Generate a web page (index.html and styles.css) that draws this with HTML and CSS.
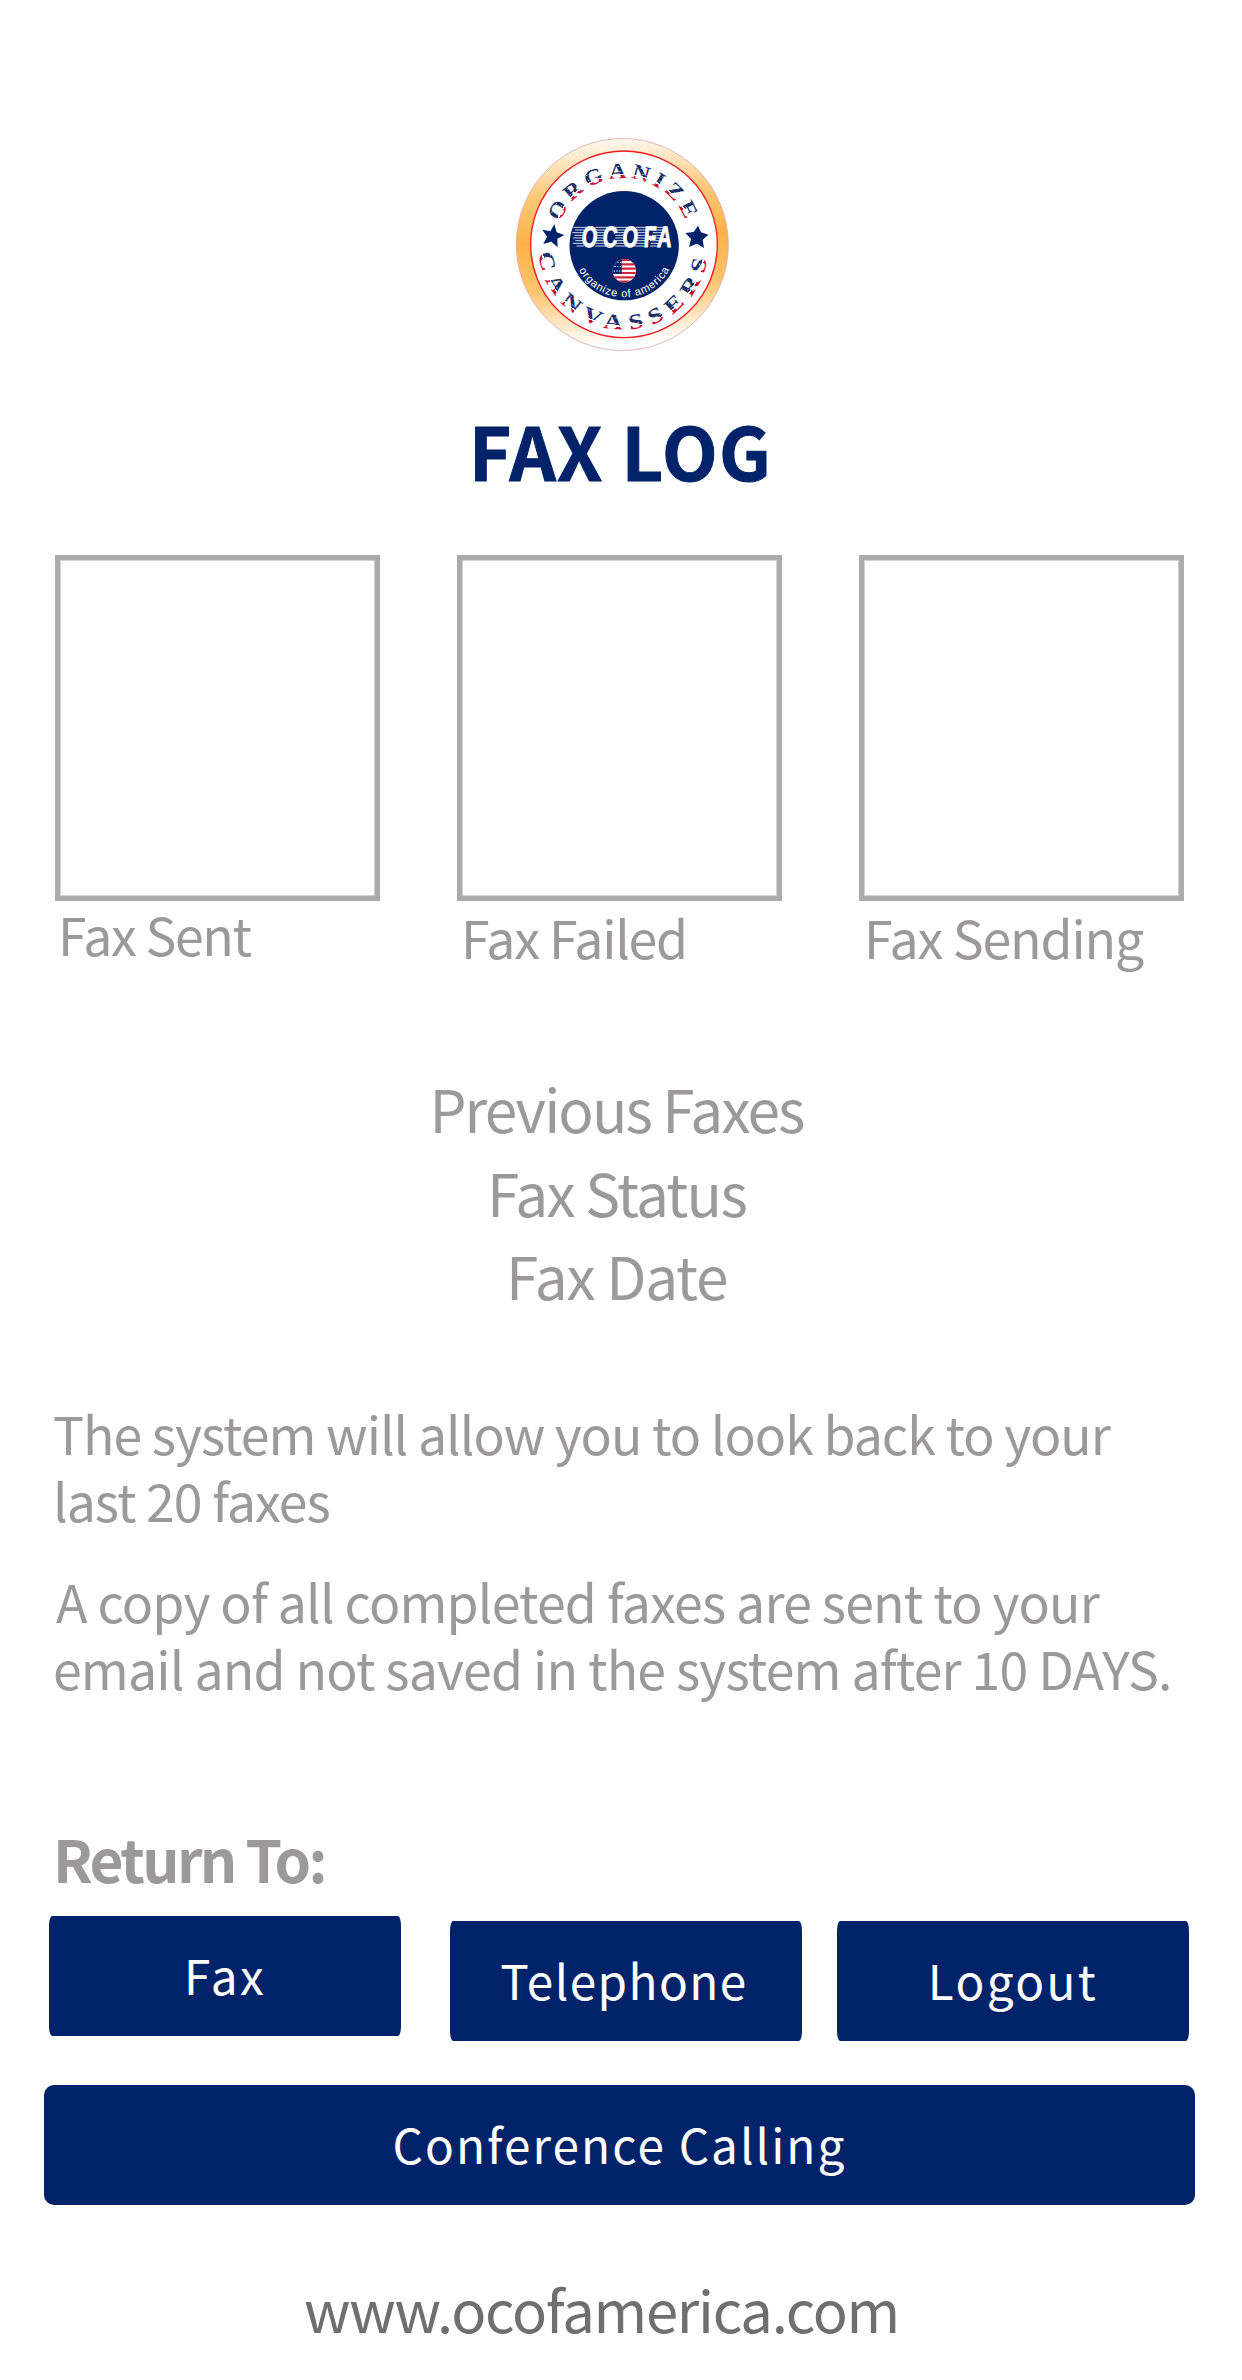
FILE: index.html
```html
<!DOCTYPE html>
<html lang="en">
<head>
<meta charset="utf-8">
<title>Fax Log</title>
<link rel="stylesheet" href="styles.css">
</head>
<body>
<main class="page">
  <svg class="logo" viewBox="0 0 735 720" role="img" aria-label="OCOFA Organize Canvassers">
    <defs>
      <linearGradient id="gold" x1="0" y1="0" x2="0.06" y2="1">
        <stop offset="0" stop-color="#fff"/>
        <stop offset=".06" stop-color="#fef3e2"/>
        <stop offset=".28" stop-color="#fdc878"/>
        <stop offset=".5" stop-color="#fdb248"/>
        <stop offset=".72" stop-color="#fdc36c"/>
        <stop offset=".93" stop-color="#fef0dc"/>
        <stop offset="1" stop-color="#fff"/>
      </linearGradient>
      <radialGradient id="inkTop" gradientUnits="userSpaceOnUse" cx="370" cy="360" r="260">
        <stop offset=".806" stop-color="#c8102e"/>
        <stop offset=".806" stop-color="#fff"/>
        <stop offset=".822" stop-color="#fff"/>
        <stop offset=".822" stop-color="#1b2d66"/>
      </radialGradient>
      <radialGradient id="inkBottom" gradientUnits="userSpaceOnUse" cx="370" cy="360" r="260">
        <stop offset=".93" stop-color="#1b2d66"/>
        <stop offset=".93" stop-color="#fff"/>
        <stop offset=".945" stop-color="#fff"/>
        <stop offset=".945" stop-color="#c8102e"/>
      </radialGradient>
      <path id="arcTop" d="M178 299A202 202 0 0 1 562 299"/>
      <path id="arcBottom" d="M115 380A256 256 0 0 0 625 380"/>
      <path id="arcInner" d="M235 431A152 152 0 0 0 512 424"/>
      <clipPath id="globe"><circle cx="373" cy="437" r="35"/></clipPath>
    </defs>
    <circle cx="367" cy="358.500" r="318" fill="url(#gold)" stroke="#dcaaa6" stroke-width="2.500"/>
    <circle cx="372" cy="358" r="280" fill="#fff" stroke="#ec1c24" stroke-width="4"/>
    <circle cx="372.500" cy="362" r="164" fill="#02236a"/>
    <text class="ring-text" fill="url(#inkTop)"><textPath href="#arcTop" startOffset="8" textLength="496" lengthAdjust="spacingAndGlyphs">ORGANIZE</textPath></text>
    <text class="ring-text ring-text-low" fill="url(#inkBottom)"><textPath href="#arcBottom" startOffset="6" textLength="752" lengthAdjust="spacingAndGlyphs">CANVASSERS</textPath></text>
    <g fill="none" stroke="#fff" stroke-width="2.500" stroke-dasharray="5 9">
      <circle cx="370" cy="360" r="220"/>
      <circle cx="370" cy="360" r="236"/>
    </g>
    <g fill="#02236a">
      <path d="M163 298L170 322L193 330L172 341L173 367L154 350L130 357L141 335L127 314L151 319Z"/>
      <path d="M594 302L603 322L625 329L608 344L612 369L590 356L567 366L573 342L556 324L581 321Z"/>
    </g>
    <path d="M220 307H262M225 315H258M217 323H254M224 331H252M219 339H250M226 347H251M218 355H252M230 363H252
             M286 307H328M288 315H322M288 323H318M288 331H316M287 339H314M286 347H314M286 355H315M286 363H318
             M342 307H388M346 315H384M346 323H380M346 331H378M346 339H376M346 347H376M346 355H378M346 363H380
             M408 307H446M408 315H444M408 323H442M408 331H440M408 339H438M406 347H436M404 355H434M402 363H432
             M458 307H496M458 315H492M458 323H488M456 331H484M450 339H480M450 347H478M452 355H474M450 363H470" stroke="#fff" stroke-width="2.500" fill="none"/>
    <text class="wordmark" transform="translate(0 366) skewX(-4) scale(.68 1)" x="358 451 538 632 692">OCOFA</text>
    <g clip-path="url(#globe)">
      <path fill="#fff" d="M336 400h75v75h-75z"/>
      <path d="M336 405h75M336 418h75M336 431h75M336 444h75M336 457h75M336 470h75" stroke="#d3263b" stroke-width="6.500"/>
      <path fill="#02236a" d="M336 400h29v46h-29z"/>
      <path d="M343 425h20M341 438h22M352 412h12" stroke="#fff" stroke-width="3" stroke-dasharray="4 4"/>
    </g>
    <text class="tagline"><textPath href="#arcInner" startOffset="4" textLength="334" lengthAdjust="spacing">organize of america</textPath></text>
  </svg>

  <h1 class="title">FAX LOG</h1>

  <section class="boxes">
    <div class="entry"><div class="box"></div><p class="label label-sent">Fax Sent</p></div>
    <div class="entry"><div class="box"></div><p class="label label-failed">Fax Failed</p></div>
    <div class="entry"><div class="box"></div><p class="label label-sending">Fax Sending</p></div>
  </section>

  <ul class="details">
    <li class="previous">Previous Faxes</li>
    <li class="status">Fax Status</li>
    <li class="date">Fax Date</li>
  </ul>

  <section class="notes">
    <p class="note note-history">The system will allow you to look back to your<br>last 20 faxes</p>
    <p class="note note-copy"><span class="indent">A copy of all completed faxes are sent to your</span><br>email and not saved in the system after 10 DAYS.</p>
  </section>

  <h2 class="return">Return To:</h2>
  <nav class="links">
    <a class="button button-fax">Fax</a>
    <a class="button button-phone">Telephone</a>
    <a class="button button-logout">Logout</a>
  </nav>
  <a class="button button-wide">Conference Calling</a>

  <footer class="site">www.ocofamerica.com</footer>
</main>
</body>
</html>
```
FILE: styles.css
```css
* { box-sizing: border-box; margin: 0; padding: 0; }

body {
  background: #fff;
  color: #9b9999;
  font-family: "Noto Sans CJK SC", "Open Sans", sans-serif;
}

.page {
  display: flex;
  flex-direction: column;
  width: 1242px;
  height: 2380px;
  padding-top: 125px;
  white-space: nowrap;
}

.logo { width: 245px; height: 240px; margin-left: 500px; flex: none; }
.ring-text { font: bold 66px "Liberation Serif", serif; letter-spacing: 12px; }
.ring-text-low { font-size: 64px; letter-spacing: 18px; }
.wordmark { font: bold 88px "Liberation Sans", sans-serif; fill: #fff; stroke: #fff; stroke-width: 3; }
.tagline { font: 33px "Liberation Sans", sans-serif; fill: #fff; }

.title {
  margin: 45px 0 0 469px;
  font-size: 72.3px;
  font-weight: 700;
  line-height: 80px;
  letter-spacing: 1.4px;
  color: #02236a;
  -webkit-text-stroke: 1px #02236a;
}

.boxes {
  display: grid;
  grid-template-columns: repeat(3, 325px);
  column-gap: 77px;
  margin: 65px 0 0 55px;
}
.box { height: 346px; border: 5px solid #ababab; box-shadow: inset 0 0 0 1px #d0d0d0; }
.label { font-size: 51.8px; line-height: 60px; }
.label-sent { padding: 3px 0 0 3px; letter-spacing: -1.41px; }
.label-failed { padding: 6px 0 0 4px; letter-spacing: -1.29px; }
.label-sending { padding: 6px 0 0 5px; letter-spacing: -1.13px; }

.details {
  width: 1233px;
  margin-top: 99px;
  list-style: none;
  text-align: center;
  font-size: 58.5px;
  line-height: 83.5px;
}
.previous { letter-spacing: -1.9px; }
.status { letter-spacing: -1.7px; }
.date { letter-spacing: -1.25px; }

.notes { display: flex; flex-direction: column; gap: 34px; margin: 82px 0 0 53px; }
.note { font-size: 51.8px; line-height: 67px; }
.note-history { letter-spacing: -1px; }
.note-copy { letter-spacing: -0.83px; }
.indent { padding-left: 3px; }

.return {
  margin: 127px 0 0 53px;
  font-size: 58.5px;
  font-weight: 700;
  line-height: 60px;
  letter-spacing: -2.61px;
}

.links { display: flex; align-items: flex-start; height: 125px; margin: 28px 0 0 49px; }
.button {
  display: flex;
  align-items: center;
  justify-content: center;
  width: 352px;
  height: 120px;
  padding-bottom: 2px;
  border-radius: 3px / 10px;
  background: #02236a;
  color: #fff;
  font-size: 47.7px;
  line-height: 60px;
}
.button-fax { letter-spacing: 2.3px; }
.button-phone { margin: 5px 0 0 49px; padding-right: 4px; letter-spacing: 1.45px; }
.button-logout { margin: 5px 0 0 35px; letter-spacing: 2.36px; }
.button-wide {
  flex: none;
  width: 1151px;
  margin: 44px 0 0 44px;
  border-radius: 10px;
  letter-spacing: 2.05px;
}

.site {
  margin: 68px 0 0 304px;
  font-size: 58px;
  line-height: 70px;
  letter-spacing: -1.28px;
  color: #6f6f6f;
}
```
